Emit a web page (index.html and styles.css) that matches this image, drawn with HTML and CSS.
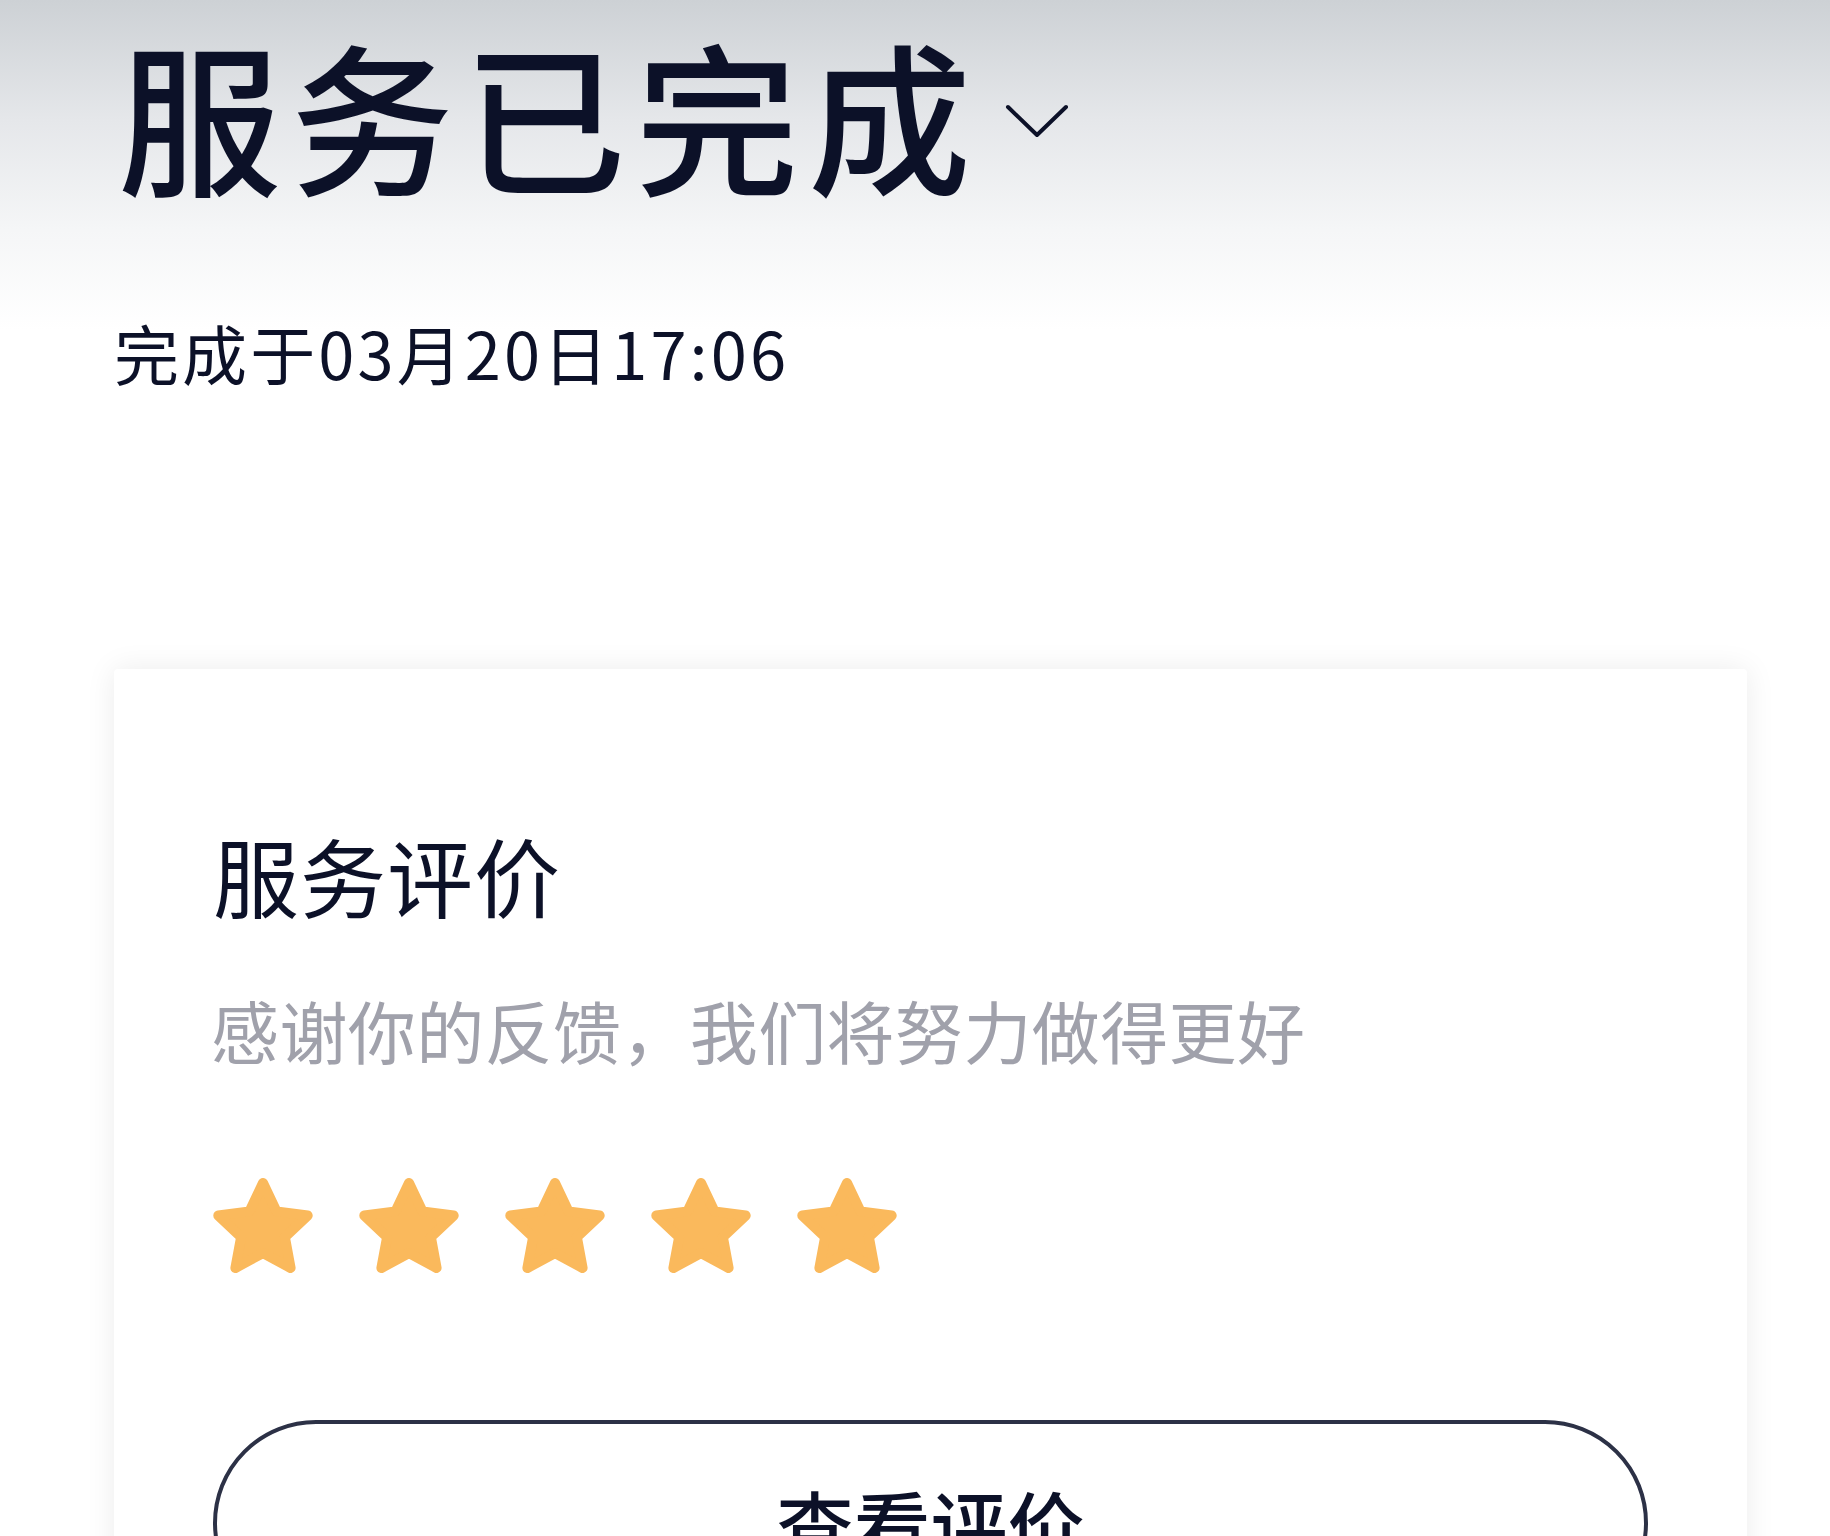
FILE: index.html
```html
<!DOCTYPE html>
<html lang="zh-CN">
<head>
    <meta charset="UTF-8">
    <meta name="viewport" content="width=device-width, initial-scale=1.0">
    <title>服务已完成</title>
    <link rel="stylesheet" href="styles.css">
</head>
<body>
    <!-- Status header -->
    <div class="status">
        <div class="status-title">
            <h1>服务已完成</h1>
            <svg class="chevron" width="64" height="34" viewBox="0 0 64 34">
                <polyline points="3,3 32,31 61,3" fill="none" stroke="#0c1128" stroke-width="4" stroke-linecap="round" stroke-linejoin="round"/>
            </svg>
        </div>
        <div class="status-time">完成于03月20日17:06</div>
    </div>

    <!-- Rating card -->
    <div class="card">
        <div class="card-title">服务评价</div>
        <div class="card-desc">感谢你的反馈，我们将努力做得更好</div>
        <div class="stars">
            <svg class="star" viewBox="0 0 100 100"><use href="#star-shape"/></svg>
            <svg class="star" viewBox="0 0 100 100"><use href="#star-shape"/></svg>
            <svg class="star" viewBox="0 0 100 100"><use href="#star-shape"/></svg>
            <svg class="star" viewBox="0 0 100 100"><use href="#star-shape"/></svg>
            <svg class="star" viewBox="0 0 100 100"><use href="#star-shape"/></svg>
        </div>
        <button class="view-btn">查看评价</button>
    </div>

    <svg width="0" height="0" style="position: absolute;">
        <defs>
            <polygon id="star-shape" points="50,5 63.5,33.4 94.7,37.5 71.9,59.1 77.6,90 50,75 22.4,90 28.1,59.1 5.3,37.5 36.5,33.4" fill="#fab95c" stroke="#fab95c" stroke-width="10" stroke-linejoin="round"/>
        </defs>
    </svg>
</body>
</html>
```

FILE: styles.css
```css
body {
    margin: 0;
    padding: 0;
    height: 1536px;
    overflow: hidden;
    font-family: "Noto Sans CJK SC", "Noto Sans", sans-serif;
    color: #0c1128;
    background: linear-gradient(180deg, #cdd1d5 0px, #e5e7ea 120px, #f5f6f7 230px, #ffffff 330px);
}

.status {
    padding: 31px 0 0 114px;
}

.status-title {
    display: flex;
    align-items: flex-start;
}

h1 {
    margin: 0;
    padding-left: 4px;
    font-size: 163px;
    line-height: 1;
    font-weight: 500;
    letter-spacing: 9.5px;
}

.chevron {
    margin: 73px 0 0 24px;
}

.status-time {
    margin-top: 126px;
    font-size: 65px;
    line-height: 1;
    letter-spacing: 3.1px;
}

.card {
    margin: 284px 0 0 114px;
    width: 1633px;
    box-sizing: border-box;
    padding: 163px 99px 0 99px;
    height: 900px;
    background-color: #ffffff;
    border-radius: 4px;
    box-shadow: 0 0 30px rgba(0, 0, 0, 0.08);
}

.card-title {
    font-size: 86px;
    line-height: 1;
    letter-spacing: 1px;
}

.card-desc {
    margin-top: 78px;
    margin-left: -2px;
    font-size: 68px;
    line-height: 1;
    letter-spacing: 0.4px;
    color: #a0a1ab;
}

.stars {
    display: flex;
    gap: 46px;
    margin-top: 114px;
}

.star {
    width: 100px;
    height: 100px;
}

.view-btn {
    display: block;
    width: 100%;
    height: 206px;
    margin-top: 142px;
    background: #ffffff;
    border: 4px solid #2c3146;
    border-radius: 110px;
    font-family: inherit;
    font-size: 77px;
    font-weight: 500;
    color: #0c1128;
}
```
